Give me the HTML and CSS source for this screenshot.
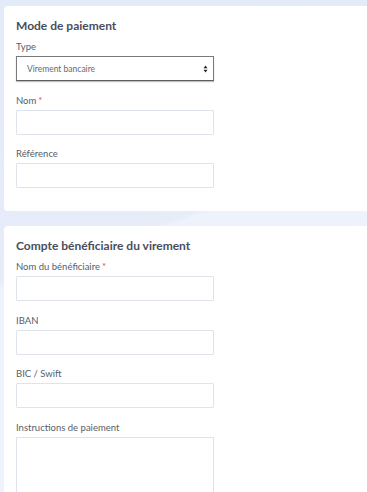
FILE: index.html
```html
<!DOCTYPE html>
<html lang="fr">
<head>
<meta charset="utf-8">
<link rel="stylesheet" href="styles.css">
</head>
<body>
<div class="page">
  <section class="card card-first">
    <h2 class="card-title">Mode de paiement</h2>
    <div class="field field-first">
      <label class="label">Type</label>
      <div class="select">
        <span class="select-value">Virement bancaire</span>
        <svg class="select-arrows" width="5" height="8" viewBox="0 0 5 8"><path d="M0.5 3.2 L2.5 0.6 L4.5 3.2 Z M0.5 4.8 L2.5 7.4 L4.5 4.8 Z" fill="#222"/></svg>
      </div>
    </div>
    <div class="field">
      <label class="label">Nom<span class="req">*</span></label>
      <div class="input"></div>
    </div>
    <div class="field">
      <label class="label">Référence</label>
      <div class="input"></div>
    </div>
  </section>
  <section class="card card-second">
    <h2 class="card-title">Compte bénéficiaire du virement</h2>
    <div class="field field-first">
      <label class="label">Nom du bénéficiaire<span class="req">*</span></label>
      <div class="input"></div>
    </div>
    <div class="field">
      <label class="label">IBAN</label>
      <div class="input"></div>
    </div>
    <div class="field">
      <label class="label">BIC / Swift</label>
      <div class="input"></div>
    </div>
    <div class="field">
      <label class="label">Instructions de paiement</label>
      <div class="textarea"></div>
    </div>
  </section>
</div>
</body>
</html>
```
FILE: styles.css
```css
html, body {
  margin: 0;
  padding: 0;
  height: 100%;
  overflow: hidden;
}
body {
  font-family: Lato, "Noto Sans", sans-serif;
  background: linear-gradient(160deg, #e3eaf8 0%, #e6ecf8 45%, #eef2fb 46%, #eff3fb 100%);
  color: #4a4e5a;
}
.page {
  padding: 6px 0 0 4px;
  display: flex;
  flex-direction: column;
  gap: 15px;
}
.card {
  background: #fff;
  border-radius: 4px 0 0 4px;
  padding: 12px 12px 23px 12px;
  width: 380px;
  box-sizing: border-box;
  display: flex;
  flex-direction: column;
}
.card-title {
  margin: 0;
  font-size: 12px;
  line-height: 16px;
  font-weight: 700;
  color: #4a4e5a;
}
.field {
  display: flex;
  flex-direction: column;
  gap: 3px;
  margin-top: 13.5px;
}
.field-first {
  margin-top: 7px;
}
.label {
  font-size: 9.5px;
  line-height: 12px;
  color: #595d68;
}
.req {
  color: #e05050;
  margin-left: 2px;
}
.input {
  width: 198px;
  height: 25px;
  box-sizing: border-box;
  border: 1px solid #dfe4ec;
  border-radius: 1px;
  background: #fff;
}
.textarea {
  width: 198px;
  height: 80px;
  box-sizing: border-box;
  border: 1px solid #dfe4ec;
  background: #fff;
}
.select {
  width: 198px;
  height: 25px;
  box-sizing: border-box;
  border: 1px solid #7a7a7a;
  border-bottom-color: #5e5e5e;
  box-shadow: 0 1px 1px rgba(0,0,0,0.25);
  display: flex;
  align-items: center;
  justify-content: space-between;
  padding: 0 5px 0 10px;
}
.select-value {
  font-size: 8.5px;
  color: #6a6a6a;
}
.select-arrows {
  display: block;
}
```
